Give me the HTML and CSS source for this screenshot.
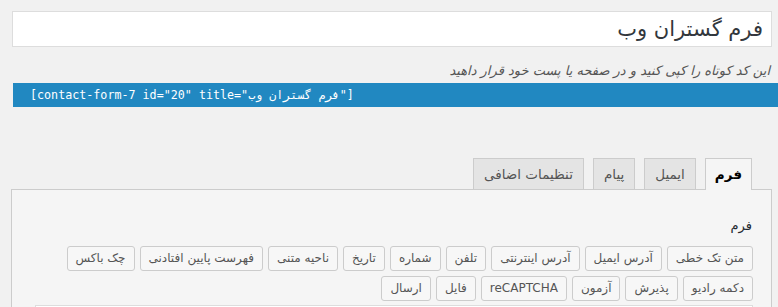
FILE: index.html
```html
<!DOCTYPE html>
<html lang="fa" dir="rtl">
<head>
    <meta charset="UTF-8">
    <title>ویرایش فرم</title>
    <link rel="stylesheet" href="styles.css">
</head>
<body>

<!-- عنوان فرم -->
<div class="title-box">فرم گستران وب</div>

<p class="hint">این کد کوتاه را کپی کنید و در صفحه یا پست خود قرار داهید</p>

<div class="shortcode" dir="ltr">[contact-form-7 id="20" title="فرم گستران وب"]</div>

<!-- زبانه ها -->
<div class="tabs">
    <div class="tab active">فرم</div>
    <div class="tab">ایمیل</div>
    <div class="tab">پیام</div>
    <div class="tab">تنظیمات اضافی</div>
</div>

<div class="panel">
    <h3>فرم</h3>
    <div class="tags">
        <span class="tag">متن تک خطی</span>
        <span class="tag">آدرس ایمیل</span>
        <span class="tag">آدرس اینترنتی</span>
        <span class="tag">تلفن</span>
        <span class="tag">شماره</span>
        <span class="tag">تاریخ</span>
        <span class="tag">ناحیه متنی</span>
        <span class="tag">فهرست پایین افتادنی</span>
        <span class="tag">چک باکس</span>
        <span class="tag">دکمه رادیو</span>
        <span class="tag">پذیرش</span>
        <span class="tag">آزمون</span>
        <span class="tag">reCAPTCHA</span>
        <span class="tag">فایل</span>
        <span class="tag">ارسال</span>
    </div>
    <div class="editor"></div>
</div>

</body>
</html>
```

FILE: styles.css
```css
body {
    margin: 0;
    background: #f1f1f1;
    font-family: "DejaVu Sans", sans-serif;
    color: #23282d;
    overflow: hidden;
}

.title-box {
    margin: 11px 6px 0 12px;
    height: 34px;
    line-height: 34px;
    padding: 0 8px;
    background: #fff;
    border: 1px solid #ddd;
    font-size: 21px;
    color: #32373c;
}

.hint {
    margin: 16px 8px 4px 0;
    font-size: 13px;
    font-style: italic;
    color: #555;
    line-height: 16px;
}

.shortcode {
    margin-left: 13px;
    height: 24px;
    line-height: 24px;
    padding-left: 17px;
    background: #2188c1;
    color: #fff;
    font-family: "DejaVu Sans Mono", monospace;
    font-size: 11.7px;
}

/* زبانه ها */
.tabs {
    display: flex;
    margin: 51px 26px 0 0;
    gap: 9px;
}

.tab {
    height: 30px;
    line-height: 30px;
    padding: 0 10px;
    background: #e4e4e4;
    border: 1px solid #ccc;
    border-bottom: none;
    font-size: 13.5px;
    color: #555;
}

.tab.active {
    background: #f5f5f5;
    color: #000;
    font-weight: bold;
    padding: 0 9px;
    position: relative;
    height: 31px;
    margin-bottom: -1px;
}

.panel {
    margin: 0 6px 0 11px;
    background: #f5f5f5;
    border: 1px solid #ccc;
    padding: 26px 18px 20px 23px;
}

.panel h3 {
    margin: 0 0 10px 0;
    font-size: 13px;
    font-weight: normal;
    line-height: 20px;
    padding-right: 1px;
}

.tags {
    display: flex;
    flex-wrap: wrap;
    gap: 5px;
}

.tag {
    height: 23px;
    line-height: 23px;
    padding: 0 8px;
    background: #f7f7f7;
    border: 1px solid #ccc;
    border-radius: 3px;
    font-size: 12px;
    color: #555;
}

.editor {
    margin-top: 4px;
    height: 80px;
    background: #fff;
    border: 1px solid #ddd;
}
```
